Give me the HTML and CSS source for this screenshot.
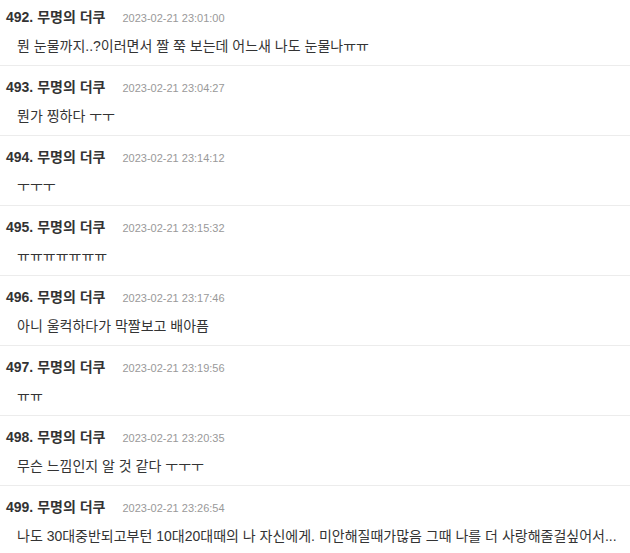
FILE: index.html
```html
<!DOCTYPE html>
<html lang="ko">
<head>
<meta charset="utf-8">
<link rel="stylesheet" href="styles.css">
</head>
<body>
<div class="list">
  <div class="item">
    <div class="head"><span class="name">492. 무명의 더쿠</span><span class="date">2023-02-21 23:01:00</span></div>
    <div class="body">뭔 눈물까지..?이러면서 짤 쭉 보는데 어느새 나도 눈물나ㅠㅠ</div>
  </div>
  <div class="item">
    <div class="head"><span class="name">493. 무명의 더쿠</span><span class="date">2023-02-21 23:04:27</span></div>
    <div class="body">뭔가 찡하다 ㅜㅜ</div>
  </div>
  <div class="item">
    <div class="head"><span class="name">494. 무명의 더쿠</span><span class="date">2023-02-21 23:14:12</span></div>
    <div class="body">ㅜㅜㅜ</div>
  </div>
  <div class="item">
    <div class="head"><span class="name">495. 무명의 더쿠</span><span class="date">2023-02-21 23:15:32</span></div>
    <div class="body">ㅠㅠㅠㅠㅠㅠㅠ</div>
  </div>
  <div class="item">
    <div class="head"><span class="name">496. 무명의 더쿠</span><span class="date">2023-02-21 23:17:46</span></div>
    <div class="body">아니 울컥하다가 막짤보고 배아픔</div>
  </div>
  <div class="item">
    <div class="head"><span class="name">497. 무명의 더쿠</span><span class="date">2023-02-21 23:19:56</span></div>
    <div class="body">ㅠㅠ</div>
  </div>
  <div class="item">
    <div class="head"><span class="name">498. 무명의 더쿠</span><span class="date">2023-02-21 23:20:35</span></div>
    <div class="body">무슨 느낌인지 알 것 같다 ㅜㅜㅜ</div>
  </div>
  <div class="item">
    <div class="head"><span class="name">499. 무명의 더쿠</span><span class="date">2023-02-21 23:26:54</span></div>
    <div class="body">나도 30대중반되고부턴 10대20대때의 나 자신에게. 미안해질때가많음 그때 나를 더 사랑해줄걸싶어서...</div>
  </div>
</div>
</body>
</html>
```
FILE: styles.css
```css
html, body {
  margin: 0;
  padding: 0;
  background: #fff;
}
body {
  font-family: "Liberation Sans", "Noto Sans CJK KR", sans-serif;
  color: #333;
  overflow: hidden;
}
.list {
  margin-top: -4px;
}
.item {
  height: 56px;
  border-bottom: 1px solid #ececec;
  padding: 13px 0 0 6px;
}
.head {
  display: flex;
  align-items: baseline;
  height: 16px;
  line-height: 16px;
}
.name {
  font-size: 14px;
  font-weight: bold;
  color: #333;
}
.date {
  font-size: 11px;
  color: #999;
  margin-left: 17px;
}
.body {
  margin-top: 12px;
  padding-left: 11px;
  font-size: 14px;
  line-height: 18px;
  color: #333;
  white-space: nowrap;
}
```
